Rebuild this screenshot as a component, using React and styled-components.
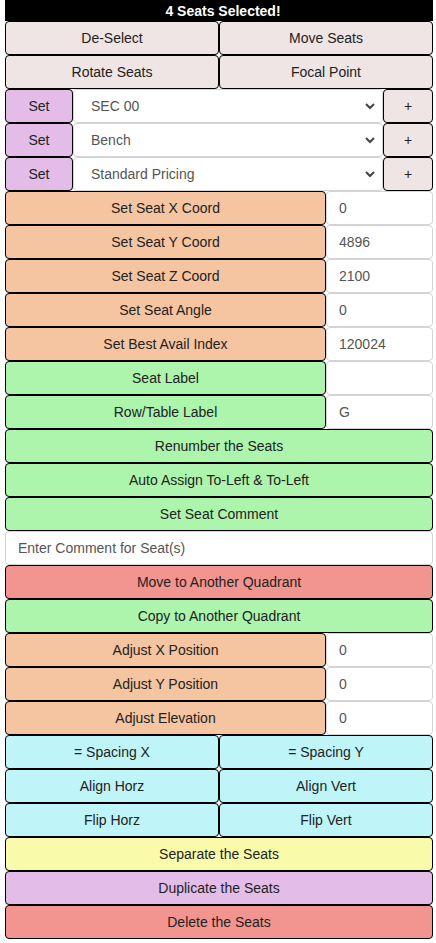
import React from "react";
import styled, { createGlobalStyle } from "styled-components";

const GlobalStyle = createGlobalStyle`
  html, body {
    margin: 0;
    padding: 0;
    background: #ffffff;
    font-family: "Liberation Sans", Arial, sans-serif;
  }
`;

const colors = {
  gray: "#efe5e5",
  purple: "#e3bde8",
  peach: "#f5c5a1",
  green: "#adf5ad",
  red: "#f29590",
  cyan: "#bff5f8",
  yellow: "#fafaab",
};

const Panel = styled.div`
  width: 428px;
  margin-left: 5px;
  display: flex;
  flex-direction: column;
`;

const Header = styled.div`
  height: 21px;
  background: #000;
  color: #fff;
  font-weight: bold;
  font-size: 14px;
  display: flex;
  align-items: center;
  justify-content: center;
  padding-left: 8px;
  box-sizing: border-box;
`;

const Row = styled.div`
  display: flex;
  height: 34px;
`;

const Btn = styled.button`
  flex: ${(p) => p.$flex || 1};
  width: ${(p) => (p.$w ? `${p.$w}px` : "auto")};
  flex-shrink: 0;
  min-width: 0;
  height: 34px;
  box-sizing: border-box;
  border: 1px solid #000;
  border-radius: 4px;
  background: ${(p) => colors[p.$color] || colors.gray};
  color: #222;
  font-family: "Liberation Sans", Arial, sans-serif;
  font-size: 14px;
  padding: 0;
  text-align: center;
`;

const SideBtn = styled(Btn)`
  flex: 0 0 ${(p) => p.$w}px;
`;

const TextField = styled.input`
  flex: ${(p) => (p.$w ? `0 0 ${p.$w}px` : 1)};
  min-width: 0;
  height: 34px;
  box-sizing: border-box;
  border: 1px solid #d4d4d4;
  border-radius: 4px;
  background: #fff;
  color: #555;
  font-family: "Liberation Sans", Arial, sans-serif;
  font-size: 14px;
  padding: 0 12px;
  outline: none;
  &::placeholder {
    color: #555;
  }
`;

const SelectBox = styled.div`
  flex: 1;
  height: 34px;
  box-sizing: border-box;
  border: 1px solid #d4d4d4;
  border-radius: 4px;
  background: #fff;
  color: #555;
  font-size: 14px;
  display: flex;
  align-items: center;
  justify-content: space-between;
  padding: 0 6px 0 17px;
`;

const Chevron = () => (
  <svg width="12" height="12" viewBox="0 0 12 12">
    <path d="M2 4l4 4 4-4" fill="none" stroke="#444" strokeWidth="2" />
  </svg>
);

const SetRow = ({ value }) => (
  <Row>
    <SideBtn $w={68} $color="purple">Set</SideBtn>
    <SelectBox>
      <span>{value}</span>
      <Chevron />
    </SelectBox>
    <SideBtn $w={50}>+</SideBtn>
  </Row>
);

const FieldRow = ({ label, value, color }) => (
  <Row>
    <Btn $color={color}>{label}</Btn>
    <TextField $w={107} defaultValue={value} />
  </Row>
);

const PairRow = ({ left, right, color }) => (
  <Row>
    <Btn $color={color}>{left}</Btn>
    <Btn $color={color}>{right}</Btn>
  </Row>
);

const FullRow = ({ label, color }) => (
  <Row>
    <Btn $color={color}>{label}</Btn>
  </Row>
);

export default function App() {
  return (
    <>
      <GlobalStyle />
      <Panel>
        <Header>4 Seats Selected!</Header>
        <PairRow left="De-Select" right="Move Seats" color="gray" />
        <PairRow left="Rotate Seats" right="Focal Point" color="gray" />
        <SetRow value="SEC 00" />
        <SetRow value="Bench" />
        <SetRow value="Standard Pricing" />
        <FieldRow label="Set Seat X Coord" value="0" color="peach" />
        <FieldRow label="Set Seat Y Coord" value="4896" color="peach" />
        <FieldRow label="Set Seat Z Coord" value="2100" color="peach" />
        <FieldRow label="Set Seat Angle" value="0" color="peach" />
        <FieldRow label="Set Best Avail Index" value="120024" color="peach" />
        <FieldRow label="Seat Label" value="" color="green" />
        <FieldRow label="Row/Table Label" value="G" color="green" />
        <FullRow label="Renumber the Seats" color="green" />
        <FullRow label="Auto Assign To-Left & To-Left" color="green" />
        <FullRow label="Set Seat Comment" color="green" />
        <Row>
          <TextField placeholder="Enter Comment for Seat(s)" />
        </Row>
        <FullRow label="Move to Another Quadrant" color="red" />
        <FullRow label="Copy to Another Quadrant" color="green" />
        <FieldRow label="Adjust X Position" value="0" color="peach" />
        <FieldRow label="Adjust Y Position" value="0" color="peach" />
        <FieldRow label="Adjust Elevation" value="0" color="peach" />
        <PairRow left="= Spacing X" right="= Spacing Y" color="cyan" />
        <PairRow left="Align Horz" right="Align Vert" color="cyan" />
        <PairRow left="Flip Horz" right="Flip Vert" color="cyan" />
        <FullRow label="Separate the Seats" color="yellow" />
        <FullRow label="Duplicate the Seats" color="purple" />
        <FullRow label="Delete the Seats" color="red" />
      </Panel>
    </>
  );
}
